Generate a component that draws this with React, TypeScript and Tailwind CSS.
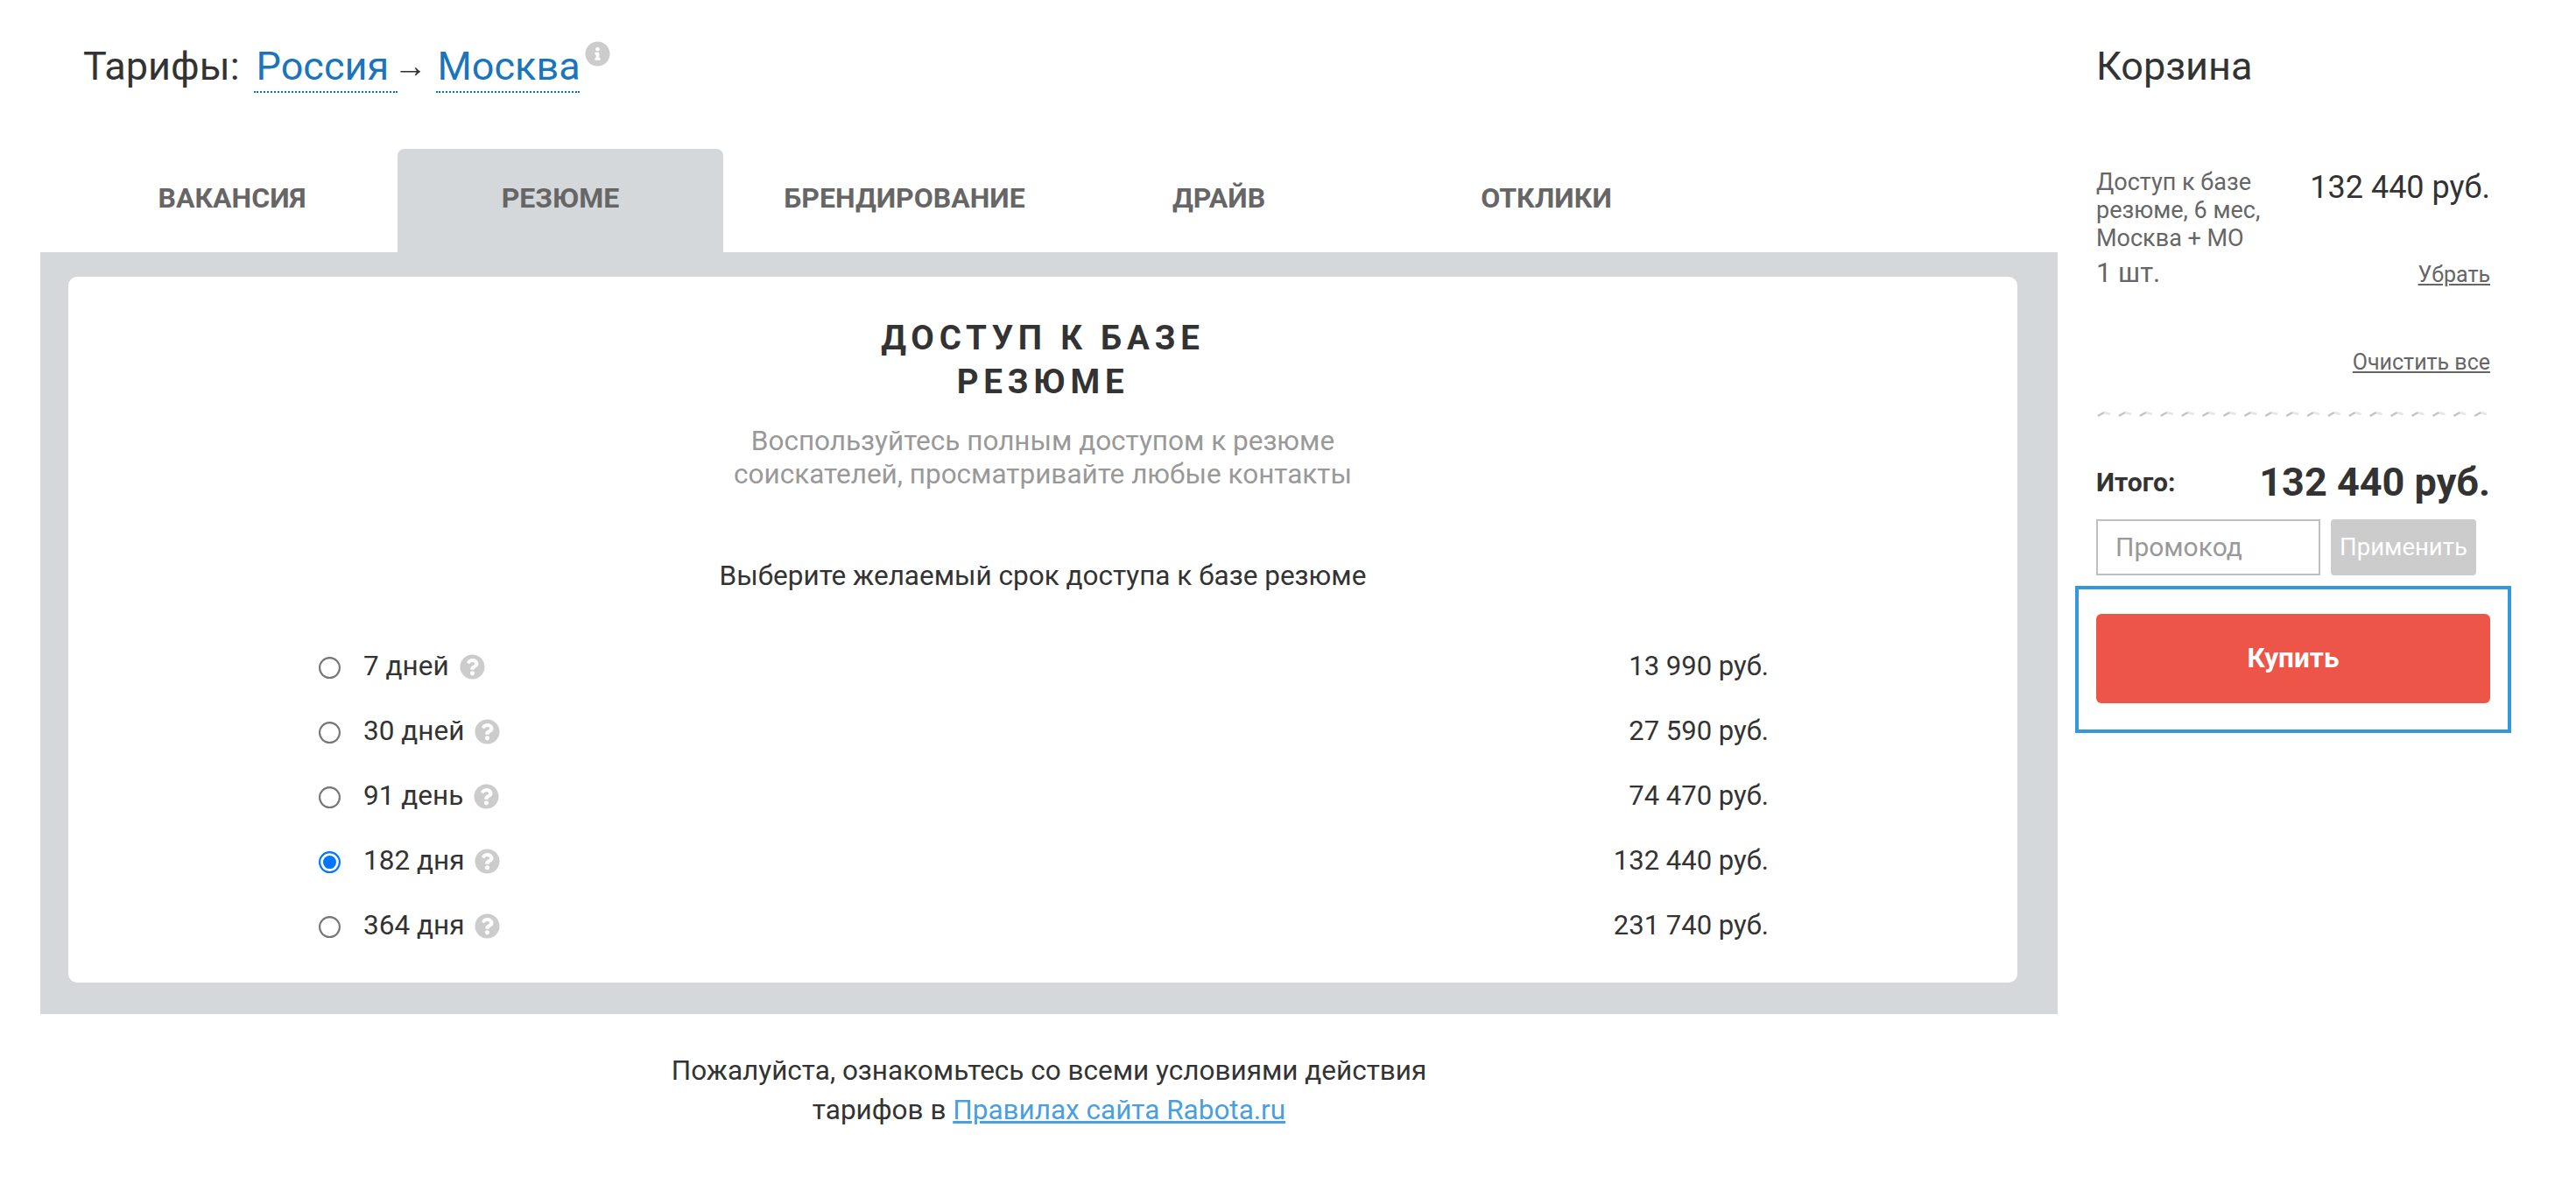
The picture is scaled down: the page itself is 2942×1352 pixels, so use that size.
import { FaInfoCircle, FaQuestionCircle } from "react-icons/fa";

const tabs = [
  { label: "ВАКАНСИЯ", width: "w-[378px]" },
  { label: "РЕЗЮМЕ", width: "w-[372px]", active: true },
  { label: "БРЕНДИРОВАНИЕ", width: "w-[414px]" },
  { label: "ДРАЙВ", width: "w-[304px]" },
  { label: "ОТКЛИКИ", width: "w-[444px]" },
];

const periods = [
  { label: "7 дней", price: "13 990 руб." },
  { label: "30 дней", price: "27 590 руб." },
  { label: "91 день", price: "74 470 руб." },
  { label: "182 дня", price: "132 440 руб.", checked: true },
  { label: "364 дня", price: "231 740 руб." },
];

function PeriodRow({ label, price, checked }: { label: string; price: string; checked?: boolean }) {
  return (
    <label className="flex h-[74px] items-center justify-between">
      <span className="flex items-center">
        <input type="radio" name="period" defaultChecked={checked} className="m-0 h-[13px] w-[13px] translate-y-[1px] [zoom:2.08]" />
        <span className="ml-[24px] text-[#333]">{label}</span>
        <FaQuestionCircle className="ml-[12px] h-[29px] w-[29px] text-[#ccc]" />
      </span>
      <span className="text-[31px] text-[#333]">{price}</span>
    </label>
  );
}

export default function App() {
  return (
    <div className="flex min-h-[1352px] w-[2942px] bg-white font-['Roboto',sans-serif] text-[31.5px] leading-[40px] text-[#333]">
      <main className="ml-[46px] w-[2304px]">
        <div className="flex h-[170px] items-start pl-[49px] pt-[45px]">
          <h1 className="text-[45px] leading-[62px] text-[#333]">Тарифы:</h1>
          <a className="ml-[16px] h-[61px] w-[164px] border-b-2 border-dotted border-[#0d72c0] pl-[3px] text-[45px] leading-[62px] text-[#1a75bc]">Россия</a>
          <span className="-ml-[4px] w-[48px] text-[38px] leading-[60px]">→</span>
          <a className="h-[61px] w-[164px] border-b-2 border-dotted border-[#0d72c0] pl-[2px] text-[45px] leading-[62px] text-[#1a75bc]">Москва</a>
          <FaInfoCircle className="mt-[2px] ml-[6px] h-[29px] w-[29px] text-[#ccc]" />
        </div>

        <nav className="ml-[30px] flex h-[118px]">
          {tabs.map((tab) => (
            <div
              key={tab.label}
              className={`flex items-center justify-center rounded-t-[8px] pb-[6px] text-[32px] font-bold text-[#666] ${tab.width} ${tab.active ? "bg-[#d5d8db]" : ""}`}
            >
              {tab.label}
            </div>
          ))}
        </nav>

        <section className="bg-[#d5d8db] pb-[36px] pl-[32px] pr-[46px] pt-[28px]">
          <div className="h-[806px] rounded-[10px] bg-white px-[286px] pt-[45px]">
            <h2 className="text-center text-[38.5px] font-bold leading-[50px] tracking-[0.15em] text-[#333]">
              ДОСТУП К БАЗЕ
              <br />
              РЕЗЮМЕ
            </h2>
            <p className="mt-[24px] text-center leading-[38px] text-[#999]">
              Воспользуйтесь полным доступом к резюме
              <br />
              соискателей, просматривайте любые контакты
            </p>
            <p className="mt-[77px] text-center text-[#333]">Выберите желаемый срок доступа к базе резюме</p>
            <div className="-mr-[2px] mt-[46px]">
              {periods.map((period) => (
                <PeriodRow key={period.label} {...period} />
              ))}
            </div>
          </div>
        </section>

        <p className="mt-[42px] text-center leading-[45px] text-[#333]">
          Пожалуйста, ознакомьтесь со всеми условиями действия
          <br />
          тарифов в <a className="text-[#4a9fe0] underline">Правилах сайта Rabota.ru</a>
        </p>
      </main>

      <aside className="ml-[44px] w-[450px]">
        <h2 className="mt-[46px] text-[45px] leading-[60px] text-[#333]">Корзина</h2>

        <div className="mt-[86px] flex items-start justify-between">
          <p className="w-[220px] text-[27px] leading-[32px] text-[#666]">Доступ к базе резюме, 6 мес, Москва + МО</p>
          <span className="mt-[2px] text-[36px] leading-[40px] text-[#333]">132 440 руб.</span>
        </div>
        <div className="mt-[4px] flex items-center justify-between">
          <span className="text-[31px] leading-[40px] text-[#666]">1 шт.</span>
          <a className="mt-[4px] text-[25px] leading-[30px] text-[#666] underline">Убрать</a>
        </div>
        <div className="mt-[60px] text-right">
          <a className="text-[25px] leading-[30px] text-[#666] underline">Очистить все</a>
        </div>

        <svg className="mt-[37px] block" width="450" height="8" viewBox="0 0 450 8">
          {Array.from({ length: 20 }, (_, i) => (
            <g key={i} transform={`translate(${i * 23.9 + 2} 0)`} fill="none" strokeWidth="2.5">
              <path d="M7 2 L14 4" stroke="#e6e6e6" />
              <path d="M0 6 L7 2" stroke="#c4c4c4" />
            </g>
          ))}
        </svg>

        <div className="mt-[44px] flex items-center justify-between">
          <span className="text-[30px] font-bold text-[#333]">Итого:</span>
          <span className="text-[45px] font-bold leading-[60px] text-[#333]">132 440 руб.</span>
        </div>

        <div className="mt-[12px] flex gap-[12px]">
          <input
            placeholder="Промокод"
            className="h-[64px] w-[256px] border-2 border-[#bfbfbf] pb-[2px] pl-[20px] text-[30px] outline-none placeholder:text-[#999]"
          />
          <button className="h-[64px] w-[166px] rounded-[4px] bg-[#ccc] text-[27.5px] text-white">Применить</button>
        </div>

        <div className="-mx-[24px] mt-[12px] border-4 border-[#3498db] px-[20px] pb-[30px] pt-[28px]">
          <button className="h-[102px] w-full rounded-[6px] bg-[#ee5549] text-[31.5px] font-bold text-white">Купить</button>
        </div>
      </aside>
    </div>
  );
}
